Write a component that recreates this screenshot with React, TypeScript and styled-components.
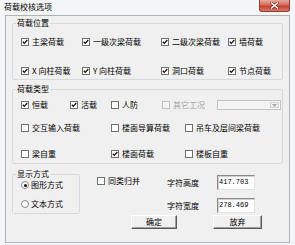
import React from "react";
import styled, { createGlobalStyle } from "styled-components";

const GlobalStyle = createGlobalStyle`
  html, body { margin: 0; padding: 0; background: #f4f5f7; }
  body {
    font-family: "Noto Sans CJK SC", "Noto Sans", sans-serif;
    font-size: 8px;
    color: #000;
  }
  * { box-sizing: border-box; }
`;

const Window = styled.div`
  width: 295px;
  height: 245px;
  display: flex;
  flex-direction: column;
  background: #f4f5f7;
  overflow: hidden;
`;

const TitleBar = styled.div`
  height: 15px;
  flex: none;
  display: flex;
  align-items: flex-start;
  justify-content: space-between;
  padding-left: 4px;
`;

const TitleText = styled.span`
  line-height: 14px;
  font-size: 8px;
`;

const CloseButton = styled.div`
  width: 31px;
  height: 12px;
  margin-right: 5px;
  border: 1px solid #8e3b32;
  border-top: none;
  border-radius: 0 0 3px 3px;
  background: linear-gradient(#e9a99d 0%, #d56b5c 45%, #c2412f 55%, #d87a63 100%);
  display: flex;
  align-items: center;
  justify-content: center;
`;

const Client = styled.div`
  margin: 0 5px;
  height: 228px;
  border: 1px solid #b3b3b3;
  background: #f0f0f0;
  padding: 2px 6px 0 6px;
  display: flex;
  flex-direction: column;
`;

const GroupBox = styled.fieldset<{ $pad: string; $mt?: number; $w?: number }>`
  margin: ${(p) => p.$mt ?? 0}px 0 0 0;
  padding: ${(p) => p.$pad};
  border: 1px solid #d3dbe0;
  border-radius: 2px;
  min-width: 0;
  width: ${(p) => (p.$w ? `${p.$w}px` : "auto")};
  flex: none;
`;

const Legend = styled.legend`
  margin-left: 3px;
  padding: 0 1px;
  line-height: 10px;
  font-size: 8px;
`;

const Row = styled.div<{ $cols: string; $mt?: number; $h?: number }>`
  display: grid;
  grid-template-columns: ${(p) => p.$cols};
  align-items: center;
  height: ${(p) => p.$h ?? 12}px;
  padding-left: 8px;
  margin-top: ${(p) => p.$mt ?? 0}px;
`;

const Item = styled.label<{ $disabled?: boolean; $gap?: number }>`
  display: flex;
  align-items: center;
  gap: ${(p) => p.$gap ?? 3}px;
  white-space: nowrap;
  line-height: 12px;
  color: ${(p) => (p.$disabled ? "#a3a3a3" : "#000")};
`;

const Box = styled.span<{ $disabled?: boolean }>`
  width: 8px;
  height: 8px;
  flex: none;
  border: 1px solid ${(p) => (p.$disabled ? "#c2c2c2" : "#707070")};
  background: ${(p) => (p.$disabled ? "#f4f4f4" : "#fff")};
  display: flex;
  align-items: center;
  justify-content: center;
`;

const RadioDot = styled.span`
  width: 8px;
  height: 8px;
  flex: none;
  border-radius: 50%;
  border: 1px solid #8a8a8a;
  background: #fff;
  display: flex;
  align-items: center;
  justify-content: center;
`;

const Dot = styled.span`
  width: 3px;
  height: 3px;
  border-radius: 50%;
  background: #111;
`;

const Combo = styled.div`
  width: 64px;
  height: 10px;
  border: 1px solid #c3c3c3;
  background: #f4f4f4;
  display: flex;
  justify-content: flex-end;
  align-items: center;
  padding-right: 1px;
`;

const ComboArrow = styled.span`
  width: 9px;
  height: 6px;
  border: 1px solid #d4d4d4;
  background: #efefef;
  display: flex;
  align-items: center;
  justify-content: center;
`;

const Lower = styled.div`
  display: flex;
  align-items: flex-start;
  margin-top: 5px;
`;

const Standalone = styled.div`
  width: 70px;
  margin-left: 17px;
  margin-top: 6px;
  height: 12px;
  display: flex;
  align-items: center;
`;

const InputsGrid = styled.div`
  display: grid;
  grid-template-columns: 50px 38px;
  grid-auto-rows: 15px;
  row-gap: 8px;
  align-items: center;
  margin-top: 6px;
`;

const FieldLabel = styled.span`
  line-height: 12px;
  white-space: nowrap;
`;

const NumBox = styled.div`
  width: 38px;
  height: 15px;
  background: #fff;
  border: 1px solid;
  border-color: #8a8a8a #e2e2e2 #e2e2e2 #8a8a8a;
  box-shadow: inset 1px 1px 0 #cfcfcf;
  font-family: "Liberation Mono", "DejaVu Sans Mono", monospace;
  font-size: 7px;
  line-height: 13px;
  padding-left: 1px;
`;

const ButtonRow = styled.div`
  display: flex;
  gap: 36px;
  padding-left: 119px;
  margin-top: 1px;
`;

const Button = styled.div<{ $w: number }>`
  width: ${(p) => p.$w}px;
  height: 14px;
  background: #f0f0f0;
  border: 1px solid;
  border-color: #ffffff #5a5a5a #5a5a5a #ffffff;
  box-shadow: inset -1px -1px 0 #a0a0a0;
  display: flex;
  align-items: center;
  justify-content: center;
  line-height: 12px;
`;

const Check = () => (
  <svg width="6" height="6" viewBox="0 0 6 6">
    <path d="M0.8 2.8 L2.3 4.4 L5.3 1" fill="none" stroke="#111" strokeWidth="1.3" />
  </svg>
);

const CheckItem = ({ label, checked, disabled }: { label: string; checked?: boolean; disabled?: boolean }) => (
  <Item $disabled={disabled}>
    <Box $disabled={disabled}>{checked ? <Check /> : null}</Box>
    <span>{label}</span>
  </Item>
);

const RadioItem = ({ label, checked }: { label: string; checked?: boolean }) => (
  <Item $gap={2}>
    <RadioDot>{checked ? <Dot /> : null}</RadioDot>
    <span>{label}</span>
  </Item>
);

export default function App() {
  return (
    <>
      <GlobalStyle />
      <Window>
        <TitleBar>
          <TitleText>荷载校核选项</TitleText>
          <CloseButton>
            <svg width="9" height="7" viewBox="0 0 9 7">
              <path d="M1.5 1 L7.5 6 M7.5 1 L1.5 6" stroke="#7a2a20" strokeWidth="2.6" strokeLinecap="square" />
              <path d="M1.5 1 L7.5 6 M7.5 1 L1.5 6" stroke="#ffffff" strokeWidth="1.4" strokeLinecap="square" />
            </svg>
          </CloseButton>
        </TitleBar>
        <Client>
          <GroupBox $pad="8px 0 2px 0">
            <Legend>荷载位置</Legend>
            <Row $cols="61px 79px 67px 1fr">
              <CheckItem label="主梁荷载" checked />
              <CheckItem label="一级次梁荷载" checked />
              <CheckItem label="二级次梁荷载" checked />
              <CheckItem label="墙荷载" checked />
            </Row>
            <Row $cols="61px 79px 67px 1fr" $mt={17}>
              <CheckItem label="X 向柱荷载" checked />
              <CheckItem label="Y 向柱荷载" checked />
              <CheckItem label="洞口荷载" checked />
              <CheckItem label="节点荷载" checked />
            </Row>
          </GroupBox>
          <GroupBox $pad="5px 0 3px 0" $mt={4}>
            <Legend>荷载类型</Legend>
            <Row $cols="49px 41px 51px 55px 64px">
              <CheckItem label="恒载" checked />
              <CheckItem label="活载" checked />
              <CheckItem label="人防" />
              <CheckItem label="其它工况" disabled />
              <Combo>
                <ComboArrow>
                  <svg width="5" height="3" viewBox="0 0 5 3">
                    <path d="M0 0 L5 0 L2.5 3 Z" fill="#a8a8a8" />
                  </svg>
                </ComboArrow>
              </Combo>
            </Row>
            <Row $cols="90px 74px 1fr" $mt={11}>
              <CheckItem label="交互输入荷载" />
              <CheckItem label="楼面导算荷载" />
              <CheckItem label="吊车及层间梁荷载" />
            </Row>
            <Row $cols="90px 74px 1fr" $mt={14}>
              <CheckItem label="梁自重" />
              <CheckItem label="楼面荷载" checked />
              <CheckItem label="楼板自重" />
            </Row>
          </GroupBox>
          <Lower>
            <GroupBox $pad="0 0 5px 0" $w={68}>
              <Legend>显示方式</Legend>
              <Row $cols="1fr" $h={10}>
                <RadioItem label="图形方式" checked />
              </Row>
              <Row $cols="1fr" $h={10} $mt={9}>
                <RadioItem label="文本方式" />
              </Row>
            </GroupBox>
            <Standalone>
              <CheckItem label="同类归并" />
            </Standalone>
            <InputsGrid>
              <FieldLabel>字符高度</FieldLabel>
              <NumBox>417.703</NumBox>
              <FieldLabel>字符宽度</FieldLabel>
              <NumBox>278.469</NumBox>
            </InputsGrid>
          </Lower>
          <ButtonRow>
            <Button $w={46}>确定</Button>
            <Button $w={49}>放弃</Button>
          </ButtonRow>
        </Client>
      </Window>
    </>
  );
}
